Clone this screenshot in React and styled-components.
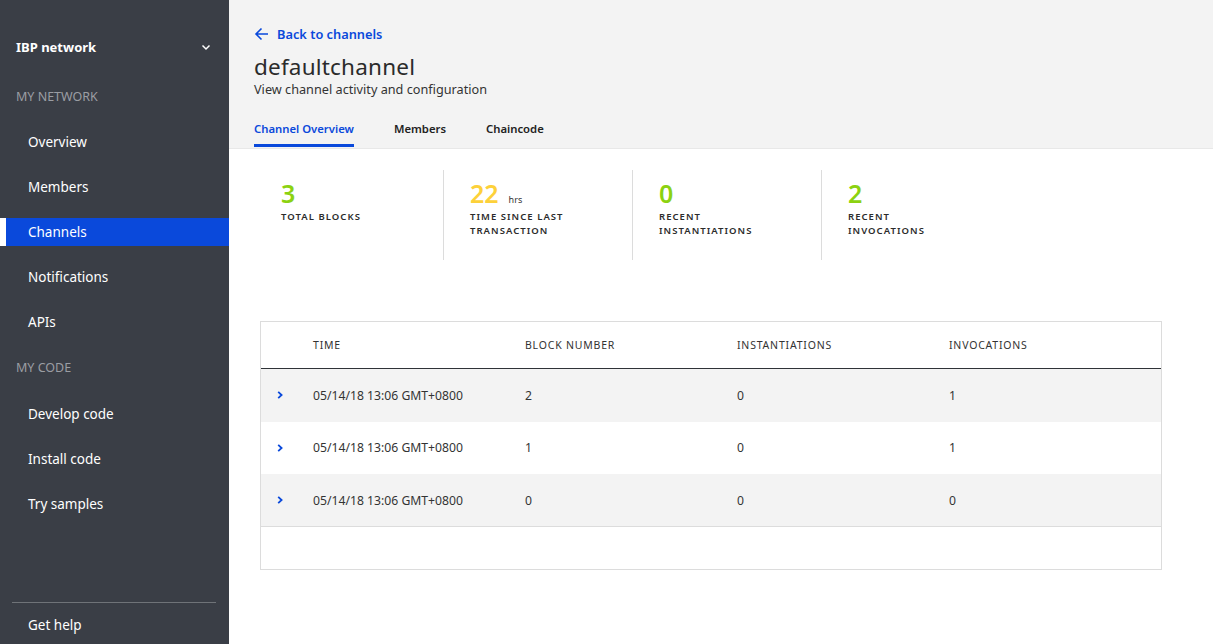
import React from "react";
import styled, { createGlobalStyle } from "styled-components";

const GlobalStyle = createGlobalStyle`
  html, body {
    margin: 0;
    padding: 0;
    background: #ffffff;
    font-family: "Noto Sans", "Open Sans", sans-serif;
    color: #333;
  }
  * { box-sizing: border-box; }
`;

const Page = styled.div`
  display: flex;
  width: 100vw;
  height: 100vh;
  overflow: hidden;
`;

/* Left navigation */
const Sidebar = styled.nav`
  width: 229px;
  flex-shrink: 0;
  background: #3a3e46;
  display: flex;
  flex-direction: column;
  padding-top: 36px;
`;

const NetworkPicker = styled.div`
  display: flex;
  align-items: center;
  justify-content: space-between;
  padding: 0 17px 0 16px;
  height: 22px;
  color: #fff;
  font-size: 13px;
  font-weight: 700;
`;

const SectionLabel = styled.div`
  color: #9a9da3;
  font-size: 12.5px;
  text-transform: uppercase;
  padding-left: 16px;
  height: 20px;
  line-height: 20px;
  margin: ${(p) => p.$mt} 0 ${(p) => p.$mb};
`;

const NavItem = styled.a`
  display: block;
  height: 28px;
  line-height: 28px;
  margin-bottom: 17px;
  padding-left: ${(p) => (p.$active ? "22px" : "28px")};
  font-size: 13.5px;
  color: #fff;
  text-decoration: none;
  background: ${(p) => (p.$active ? "#0a49db" : "transparent")};
  border-left: ${(p) => (p.$active ? "6px solid #fff" : "none")};
`;

const SideFooter = styled.div`
  margin-top: auto;
  padding: 0 13px 0 12px;
`;

const Divider = styled.hr`
  border: none;
  border-top: 1px solid #6f7378;
  margin: 0;
`;

const HelpLink = styled.a`
  display: block;
  color: #fff;
  font-size: 13.5px;
  line-height: 20px;
  padding: 12px 0 0 16px;
  height: 41px;
`;

/* Main area */
const Main = styled.main`
  flex: 1;
  display: flex;
  flex-direction: column;
  min-width: 0;
`;

const Header = styled.header`
  background: #f3f3f3;
  padding: 25px 0 0 25px;
  height: 149px;
  border-bottom: 1px solid #e8e8e8;
`;

const BackLink = styled.a`
  display: flex;
  width: fit-content;
  align-items: center;
  gap: 8px;
  color: #0a49db;
  font-size: 12.8px;
  font-weight: 600;
  text-decoration: none;
  height: 18px;
  line-height: 18px;
`;

const Title = styled.h1`
  margin: 11px 0 0;
  font-size: 22.5px;
  font-weight: 400;
  color: #2b2b2b;
  line-height: 26px;
  letter-spacing: 0.2px;
`;

const Subtitle = styled.p`
  margin: 0;
  font-size: 12.7px;
  color: #333;
  line-height: 18px;
`;

const Tabs = styled.div`
  display: flex;
  gap: 40px;
  margin-top: 22px;
`;

const Tab = styled.a`
  font-size: 11.3px;
  font-weight: 600;
  line-height: 18px;
  color: ${(p) => (p.$active ? "#0a49db" : "#222")};
  height: 27px;
  border-bottom: 3px solid ${(p) => (p.$active ? "#0a49db" : "transparent")};
  text-decoration: none;
`;

const Stats = styled.section`
  display: flex;
  padding: 21px 0 0 26px;
`;

const Stat = styled.div`
  width: 189px;
  height: 90px;
  padding: 10px 0 0 26px;
  border-right: ${(p) => (p.$last ? "none" : "1px solid #dcdcdc")};
`;

const StatValue = styled.div`
  display: flex;
  align-items: baseline;
  gap: 10px;
  font-size: 25px;
  font-weight: 600;
  line-height: 26px;
  color: ${(p) => p.$color};
`;

const Unit = styled.span`
  font-size: 9px;
  font-weight: 400;
  line-height: 1;
  color: #333;
`;

const StatLabel = styled.div`
  margin-top: 4px;
  font-size: 9.5px;
  font-weight: 600;
  letter-spacing: 1.05px;
  line-height: 14px;
  text-transform: uppercase;
  color: #2b2b2b;
`;

const TableWrap = styled.div`
  margin: 61px 0 0 31px;
  width: 902px;
  border: 1px solid #dcdcdc;
`;

const Grid = `
  display: grid;
  grid-template-columns: 52px 212px 212px 212px 1fr;
  align-items: center;
`;

const HeadRow = styled.div`
  ${Grid}
  height: 47px;
  border-bottom: 1px solid #2f3338;
  font-size: 10.5px;
  letter-spacing: 0.8px;
  text-transform: uppercase;
  color: #333;
`;

const Row = styled.div`
  ${Grid}
  height: ${(p) => (p.$last ? "53px" : "52.5px")};
  background: ${(p) => (p.$shade ? "#f3f3f3" : "#fff")};
  font-size: 12.2px;
  color: #333;
  border-bottom: ${(p) => (p.$last ? "1px solid #dcdcdc" : "none")};
`;

const Expand = styled.span`
  display: flex;
  padding-left: 14px;
  color: #0a49db;
`;

const EmptyRow = styled.div`
  height: 42px;
`;

const Chevron = () => (
  <svg width="10" height="10" viewBox="0 0 10 10" fill="none">
    <path d="M3.2 1.8 L6.6 5 L3.2 8.2" stroke="currentColor" strokeWidth="1.8" />
  </svg>
);

const ChevronDown = () => (
  <svg width="12" height="12" viewBox="0 0 12 12" fill="none">
    <path d="M2.5 4.5 L6 8 L9.5 4.5" stroke="#fff" strokeWidth="1.5" />
  </svg>
);

const ArrowLeft = () => (
  <svg width="15" height="14" viewBox="0 0 15 14" fill="none">
    <path d="M14 7 H2 M7.5 1.5 L2 7 L7.5 12.5" stroke="#0a49db" strokeWidth="1.6" />
  </svg>
);

const network = ["Overview", "Members", "Channels", "Notifications", "APIs"];
const code = ["Develop code", "Install code", "Try samples"];

const stats = [
  { value: "3", color: "#8cd211", label: ["Total blocks"] },
  { value: "22", unit: "hrs", color: "#fdd13a", label: ["Time since last", "transaction"] },
  { value: "0", color: "#8cd211", label: ["Recent", "instantiations"] },
  { value: "2", color: "#8cd211", label: ["Recent", "invocations"] },
];

const rows = [
  { block: "2", inst: "0", inv: "1" },
  { block: "1", inst: "0", inv: "1" },
  { block: "0", inst: "0", inv: "0" },
];

export default function App() {
  return (
    <>
      <GlobalStyle />
      <Page>
        <Sidebar>
          <NetworkPicker>
            IBP network
            <ChevronDown />
          </NetworkPicker>
          <SectionLabel $mt="29px" $mb="21px">My network</SectionLabel>
          {network.map((n) => (
            <NavItem key={n} $active={n === "Channels"}>
              {n}
            </NavItem>
          ))}
          <SectionLabel $mt="5px" $mb="22px">My code</SectionLabel>
          {code.map((n) => (
            <NavItem key={n}>{n}</NavItem>
          ))}
          <SideFooter>
            <Divider />
            <HelpLink>Get help</HelpLink>
          </SideFooter>
        </Sidebar>
        <Main>
          <Header>
            <BackLink>
              <ArrowLeft />
              Back to channels
            </BackLink>
            <Title>defaultchannel</Title>
            <Subtitle>View channel activity and configuration</Subtitle>
            <Tabs>
              <Tab $active>Channel Overview</Tab>
              <Tab>Members</Tab>
              <Tab>Chaincode</Tab>
            </Tabs>
          </Header>
          <Stats>
            {stats.map((s, i) => (
              <Stat key={i} $last={i === stats.length - 1}>
                <StatValue $color={s.color}>
                  {s.value}
                  {s.unit && <Unit>{s.unit}</Unit>}
                </StatValue>
                <StatLabel>
                  {s.label.map((l) => (
                    <div key={l}>{l}</div>
                  ))}
                </StatLabel>
              </Stat>
            ))}
          </Stats>
          <TableWrap>
            <HeadRow>
              <span />
              <span>Time</span>
              <span>Block number</span>
              <span>Instantiations</span>
              <span>Invocations</span>
            </HeadRow>
            {rows.map((r, i) => (
              <Row key={i} $shade={i % 2 === 0} $last={i === rows.length - 1}>
                <Expand>
                  <Chevron />
                </Expand>
                <span>05/14/18 13:06 GMT+0800</span>
                <span>{r.block}</span>
                <span>{r.inst}</span>
                <span>{r.inv}</span>
              </Row>
            ))}
            <EmptyRow />
          </TableWrap>
        </Main>
      </Page>
    </>
  );
}
